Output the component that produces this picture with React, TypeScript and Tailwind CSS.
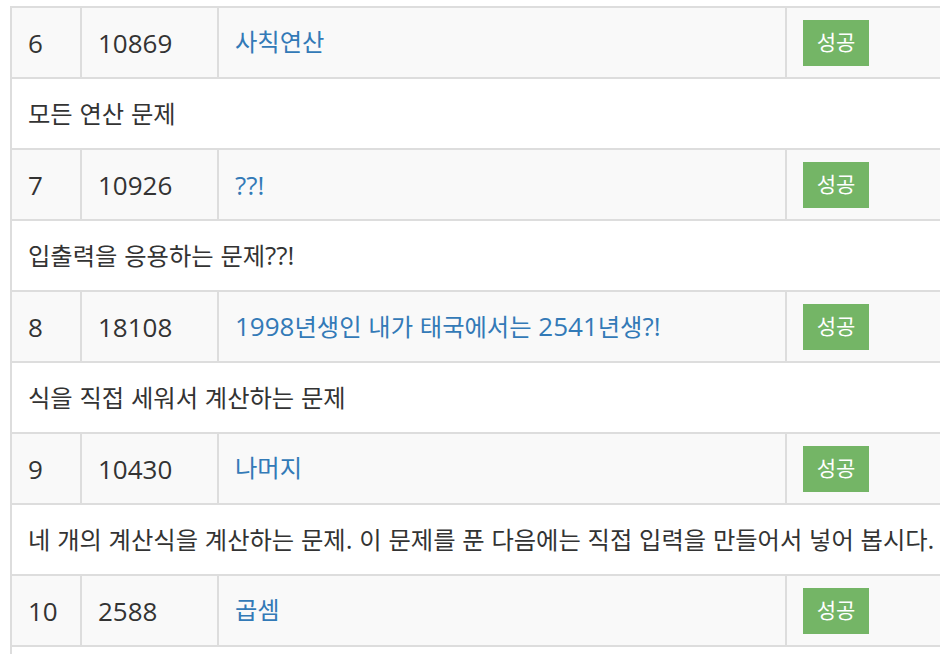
import { Fragment } from "react";

type Problem = {
  no: number;
  id: string;
  title: string;
  desc?: string;
};

const PROBLEMS: Problem[] = [
  { no: 6, id: "10869", title: "사칙연산", desc: "모든 연산 문제" },
  { no: 7, id: "10926", title: "??!", desc: "입출력을 응용하는 문제??!" },
  {
    no: 8,
    id: "18108",
    title: "1998년생인 내가 태국에서는 2541년생?!",
    desc: "식을 직접 세워서 계산하는 문제",
  },
  {
    no: 9,
    id: "10430",
    title: "나머지",
    desc: "네 개의 계산식을 계산하는 문제. 이 문제를 푼 다음에는 직접 입력을 만들어서 넣어 봅시다.",
  },
  { no: 10, id: "2588", title: "곱셈", desc: "" },
];

// Hangul runs get their own size so widths line up with the original font
function Mixed({ text }: { text: string }) {
  const parts = text.split(/([가-힣]+)/).filter((p) => p.length > 0);
  return (
    <span className="whitespace-pre">
      {parts.map((p, i) =>
        /[가-힣]/.test(p) ? (
          <span key={i} className="text-[24.3px]">
            {p}
          </span>
        ) : (
          <span key={i} className="text-[26px]">
            {p}
          </span>
        )
      )}
    </span>
  );
}

export default function App() {
  return (
    <div
      className="h-[654px] w-[940px] overflow-hidden bg-white pl-[10px] pt-[6px] text-[#333]"
      style={{ fontFamily: '"Open Sans", "Noto Sans CJK KR", sans-serif' }}
    >
      <div className="w-[1000px] border-l-2 border-[#ddd]">
        {PROBLEMS.map((p) => (
          <Fragment key={p.id}>
            <div className="flex h-[71px] border-t-2 border-[#ddd] bg-[#f9f9f9] leading-none">
              <div className="flex w-[68px] items-center px-4 text-[26px]">{p.no}</div>
              <div className="flex w-[137px] items-center border-l-2 border-[#ddd] px-4 text-[26px]">
                {p.id}
              </div>
              <div className="flex w-[568px] items-center border-l-2 border-[#ddd] px-4 text-[#337ab7]">
                <Mixed text={p.title} />
              </div>
              <div className="flex flex-1 items-center border-l-2 border-[#ddd] px-4">
                <span className="flex h-[46px] w-[66px] items-center justify-center bg-[#74b566] text-[21px] text-white">
                  성공
                </span>
              </div>
            </div>
            <div className="flex h-[71px] items-center border-t-2 border-[#ddd] bg-white px-4 leading-none">
              <Mixed text={p.desc ?? ""} />
            </div>
          </Fragment>
        ))}
      </div>
    </div>
  );
}
